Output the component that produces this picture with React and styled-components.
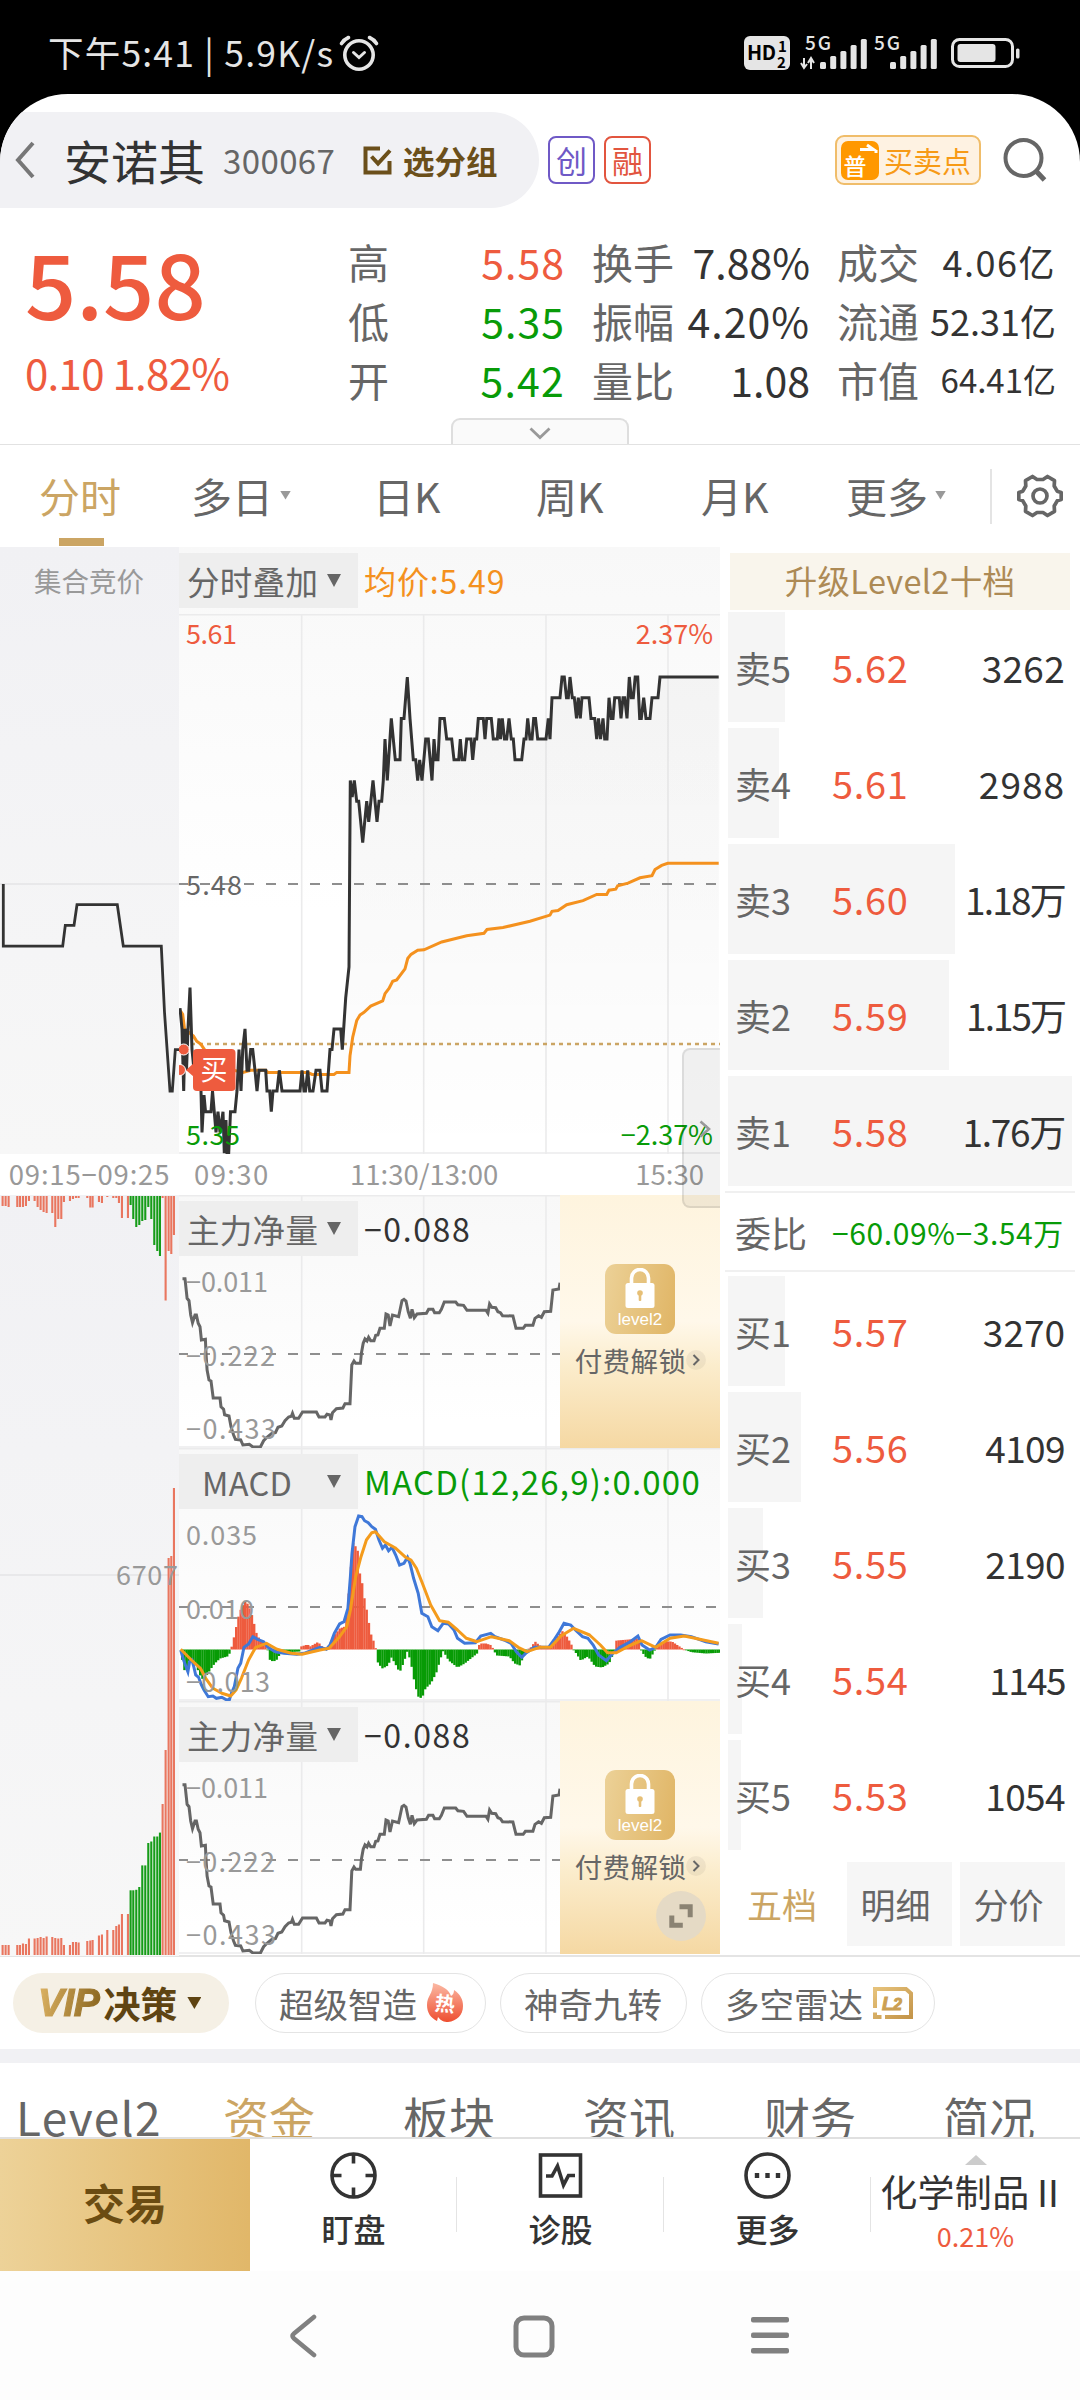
import React from "react";
import styled, { createGlobalStyle } from "styled-components";

const RED = "#ee5b3e";
const GREEN = "#089b08";
const GOLD = "#cba564";
const ORANGE = "#f4911e";
const FONT = '"Noto Sans CJK SC", "Noto Sans", sans-serif';

// [x, price in cents]
const auctionPoints = [
  [3.3, 548], [3.3, 545], [62.7, 545], [65.3, 546], [74, 546], [77, 547], [117.3, 547], [123.3, 545],
  [161.3, 545], [164.5, 541.8], [170, 538], [172.3, 538], [175.3, 540], [180, 540],
];

const pricePoints = [
  [180, 542], [182, 541], [183.7, 538], [185, 541], [186.5, 539], [188, 541], [190, 543], [192, 540],
  [194, 539], [201, 538], [202, 536], [204, 537.8], [205.5, 537], [211, 537], [212.5, 538], [216, 536],
  [218, 537], [220, 536], [223, 537], [224.3, 535], [226, 536.6], [227, 535], [228.7, 535], [230.5, 537],
  [235, 537], [237, 538], [239, 540], [241, 538], [242.7, 540], [245, 541], [247, 539], [248.7, 539],
  [250.7, 540], [252.7, 540], [255, 539], [257, 538], [259, 539], [265.7, 539], [267, 538],
  [269.7, 538], [271.3, 537], [273, 538], [277, 538], [279.3, 539], [282, 538], [300, 538], [302, 539],
  [304, 538], [305.5, 538], [307.7, 539], [309.7, 538], [313, 538], [316, 539], [320, 539], [322, 538],
  [327, 538], [330, 540], [332, 540], [334, 541], [340.7, 541], [342.3, 540], [345.7, 542.5],
  [349, 544], [349.7, 549], [350.3, 553], [352.2, 552.2], [354.3, 553], [356.7, 552], [358.7, 552],
  [362.7, 550], [366.7, 552], [368.7, 551], [373, 553], [377, 551], [379, 552], [381.7, 552],
  [383.3, 553], [385, 555], [387.3, 553], [391.3, 556], [395.3, 554], [400, 554], [401.3, 556],
  [404, 556], [407.3, 558], [410, 556], [413.3, 554], [415.7, 554], [417.7, 553], [419.7, 554],
  [422, 553], [425.7, 555], [428.3, 555], [432, 553], [434, 555], [435.7, 554], [438, 554], [440, 556],
  [444.3, 556], [446.7, 555], [451.7, 555], [454, 554], [458.7, 554], [460.3, 555], [462, 554],
  [464.7, 554], [466.7, 555], [471, 555], [472.7, 554], [474.7, 555], [476.7, 555], [478.3, 556],
  [483.3, 556], [485, 555], [486.7, 556], [491.3, 556], [493.3, 555], [497.3, 555], [499, 556],
  [500.5, 555], [502.3, 556], [504.5, 555], [506.7, 555], [509, 556], [511.3, 555], [513.3, 555],
  [515, 554], [521.7, 554], [524, 555], [526, 555], [527.7, 556], [530, 555], [532, 555], [533.7, 556],
  [535.5, 556], [537.7, 555], [546, 555], [548.3, 556], [550, 555], [552, 557], [560, 557], [562, 558],
  [564.3, 558], [566.5, 557], [568.3, 557], [570, 558], [572.3, 557], [574.3, 557], [576.5, 556],
  [578.3, 557], [580.3, 556], [582, 557], [589, 557], [591, 556], [594.7, 556], [596.7, 555],
  [598.5, 556], [600.5, 555], [603, 556], [604.7, 555], [607, 555], [609, 557], [611.3, 556],
  [613, 556], [614.7, 557], [619.3, 557], [621, 556], [623, 557], [624.7, 557], [627, 556],
  [629.3, 558], [631.3, 557], [633.3, 557], [635.2, 558], [637.7, 558], [639.7, 556], [641.3, 556],
  [643.7, 557], [646, 556], [650, 556], [652, 557], [658, 557], [660, 558], [718.7, 558],
];

const averagePoints = [
  [180, 541.9], [182.7, 541.7], [184.5, 541], [193.5, 540.65], [196.7, 540.4], [201, 540.25],
  [210, 539.6], [225, 539.1], [243, 538.9], [250.7, 539], [265.7, 539], [267.7, 538.9], [308, 538.9],
  [312, 538.8], [334, 538.8], [336.7, 538.9], [349, 538.9], [350, 539.7], [352.7, 540.6],
  [356.7, 541.4], [360, 541.67], [364, 541.8], [370.7, 542.1], [382.7, 542.35], [385, 542.7],
  [389, 542.95], [392.7, 543.3], [396.7, 543.36], [405, 543.9], [407.7, 544.4], [411, 544.6],
  [417.7, 544.8], [424, 544.82], [441.7, 545.2], [466.7, 545.5], [484, 545.62], [487, 545.8],
  [503, 545.9], [530, 546.2], [550, 546.5], [552, 546.68], [558, 546.72], [566.7, 547], [583, 547.2],
  [596.7, 547.5], [606.7, 547.5], [609, 547.7], [615.7, 547.75], [617.7, 547.92], [628, 548.04],
  [640, 548.3], [652, 548.4], [655, 548.7], [661.7, 548.9], [667.7, 549], [718.7, 549],
];

const flowPoints = [
  [3.5, 83.7], [6, 83.7], [8.1, 103.3], [10, 105.7], [11.7, 120], [13.5, 127.7], [16, 120], [17.4, 120],
  [19.2, 128.3], [21, 131.7], [22.4, 145], [26.4, 144.3], [27, 158.3], [28.1, 175], [30, 185], [32, 186],
  [34.2, 203], [41, 203], [42, 211.7], [44.6, 214.3], [45.6, 219.7], [50, 221], [52, 231.7], [54.6, 240],
  [56.4, 244.3], [61.7, 245], [63.9, 250], [70.3, 249.3], [73.9, 252], [81.4, 252], [84.6, 245.7],
  [88, 242.3], [92.8, 238.3], [96.4, 237.7], [99, 232.3], [102.8, 231], [106, 225.7], [109.6, 222],
  [112.4, 221.3], [113.5, 218.3], [115.3, 223.3], [119.6, 223.3], [123.5, 217], [137.4, 217], [140, 222],
  [146, 222], [148, 219.3], [151, 220], [152, 225], [153.5, 217.7], [157.4, 213.7], [163.9, 213],
  [166, 208.7], [171, 208.7], [172.8, 170], [175, 166], [176.7, 168.3], [181.4, 168.3], [182.4, 158.3],
  [184.2, 148.3], [186, 144], [188, 146], [189.6, 142.3], [191.7, 145.7], [195, 145.7], [196.7, 140.3],
  [198.9, 140], [201, 133.3], [205.3, 133.3], [207, 119], [209.2, 120], [211, 131], [213.5, 120],
  [219.6, 121.7], [223, 105.7], [225, 104.3], [227, 106], [229.2, 116.7], [231.4, 123.3], [233, 114.3],
  [235.3, 122.7], [238, 119], [247.4, 118.3], [249.6, 114.3], [253.9, 114.3], [255.6, 117.7],
  [260.3, 117.7], [262.4, 114.3], [265.3, 107], [276.7, 107], [278.9, 109.7], [284.6, 110.3],
  [288, 115.3], [307, 115.3], [308.9, 118.3], [310.6, 109], [312.8, 112.3], [316.7, 112.7],
  [318.9, 116.7], [321.4, 117.7], [323.5, 120.7], [333.9, 121], [337, 133.3], [344.2, 133.3],
  [346.4, 130.3], [353.9, 130.3], [356, 123.3], [359.6, 120.7], [362.4, 122.3], [365.3, 116.7],
  [371.7, 116.3], [373.9, 95], [380, 94], [381, 87.7],
];

const difPoints = [
  [1.7, 202], [4.6, 212], [7, 218.7], [8.9, 223.7], [10.6, 213.7], [13, 212], [14.6, 218], [16.7, 227],
  [19.6, 229.3], [22.4, 237], [25, 242], [29.2, 248.7], [33.9, 248], [37.4, 250.3], [42.8, 249.3],
  [47, 251.6], [50.3, 252], [52.4, 245.3], [55.3, 238.7], [58.9, 220.3], [61.7, 215.3], [65, 199.3],
  [69.6, 196], [73.9, 188.7], [78.5, 191.3], [84.6, 193.7], [89, 199.3], [96.4, 203.7], [105, 205.3],
  [117.8, 206.3], [125, 205.3], [132, 202.7], [141, 199.3], [147.4, 201.3], [151, 197], [155.3, 185.3],
  [160.6, 176], [165, 173.7], [168.9, 160.3], [171.4, 128.7], [173, 105.3], [176, 78.7], [179.6, 68],
  [183, 68.7], [185.6, 72.7], [189.2, 74.7], [192.8, 78.7], [196.4, 81.3], [200, 92], [203.5, 100.3],
  [206.4, 97], [209.6, 102.7], [213, 99.3], [216.7, 107], [220.6, 117], [225, 115.3], [228.5, 109.3],
  [231, 115.3], [234.6, 130.3], [239.2, 145.3], [242.8, 165.3], [248.9, 168.7], [252.8, 178.7],
  [258.9, 182.7], [264.2, 175.3], [269.6, 176], [275, 182], [278.5, 190.3], [285.6, 195.3],
  [296.4, 194.7], [301.7, 188], [311.7, 185.3], [316, 188.7], [325, 192], [332, 195.3], [337.4, 203.7],
  [342.8, 209.3], [347.4, 204.7], [355.3, 199.3], [369.6, 199.3], [375, 192], [380.3, 183.7],
  [385, 175.3], [391.7, 177], [396.4, 182], [403.5, 188.7], [408.9, 190.3], [414.2, 197], [419.6, 207],
  [427.4, 212.7], [433.9, 205.3], [441, 199.3], [449.9, 194.7], [458.9, 188], [463, 197], [470.6, 202],
  [476.7, 199.3], [482, 191.3], [491, 187], [501.7, 187], [512.4, 188.7], [526.7, 193.7], [539.6, 196],
];

const deaPoints = [
  [1.7, 201.3], [12.4, 212], [21.4, 220.3], [26.7, 230.3], [33.9, 240.3], [42.8, 245.3], [51.7, 248],
  [57, 242], [62.4, 230.3], [69.6, 212], [76.7, 199.3], [87.4, 195.3], [98, 201.3], [112.4, 205.3],
  [123, 206.3], [141, 202], [150, 200.3], [160.6, 188.7], [167.8, 178.7], [171.4, 162], [176.7, 128.7],
  [182, 108.7], [187.4, 92], [192.8, 84.7], [196.4, 83.7], [205.3, 93.7], [216, 99.7], [226.7, 109.3],
  [232, 112], [237.4, 120.3], [242.8, 133.7], [251.7, 157], [260.6, 172.7], [269.6, 174.3],
  [278.5, 182], [287.4, 190.3], [298, 193.7], [312.4, 188.7], [330.3, 192.7], [339.2, 199.3],
  [348, 203.7], [360.6, 199.3], [371.4, 199.3], [382, 188], [394.6, 180.3], [410.6, 187],
  [421.4, 197], [428.5, 204.7], [437.4, 204.7], [449.9, 198], [462.4, 192.7], [476.7, 199.3],
  [491, 190.3], [505.3, 188], [539.6, 195.3],
];

// [x, bar height], positive is above the zero line
const histogram = [
  [1.5, 0], [4.6, -20], [7, -22], [10.6, -9], [16, -14], [22.4, -29], [25, -30], [32, -19], [35.6, -14],
  [41, -9], [50, -6.5], [51, 0], [52.4, 2], [54.6, 11], [57, 22], [59.6, 34], [62.4, 42], [66.7, 49],
  [70.3, 42], [73, 34], [76, 22], [78, 14], [82, 9], [87.4, 6], [88.5, 0], [91, -11], [94.6, -12],
  [98, -10], [101.7, -3], [121, -2], [122, 3], [128.5, 5], [131, 3], [139, 7.5], [143, 3], [148, 0],
  [155, 14], [160.6, 21], [166, 23], [169.6, 56], [173.9, 107], [178.5, 100], [180.3, 77], [182, 74],
  [185, 53], [187.4, 41], [189.6, 28], [191.7, 16], [194, 10], [196.4, 2], [197, 0], [199, -14],
  [203.5, -19], [208.9, -16], [212.4, -8], [216, -14], [220.6, -23], [225, -12], [228.5, -1],
  [232, -14], [235.6, -34], [239, -47], [242.8, -49], [246.4, -39], [251.7, -34], [257, -24],
  [262.4, -6], [264.2, -1.5], [269.6, -11], [278.5, -18], [285.6, -14], [298, -4], [298.5, 2],
  [301, 6], [307, 6], [313, 4], [314, 0], [317.8, -6], [330.3, -7], [335.6, -14], [341, -16],
  [344.6, -6], [348, 0], [351.7, 2], [356, 8], [360.6, 4], [371.4, 2], [376.7, 11], [384, 19],
  [389, 11], [393.9, 2], [394.6, 0], [401.7, -11], [408.9, -7], [416, -17], [423, -18], [430, -14],
  [435.6, -1], [436, 5], [437.4, 9], [449.9, 10], [458.9, 11], [461.5, 0], [466, -7], [470.6, -10],
  [475, -2], [477, 1], [485.6, 8], [492.8, 8], [505, 0], [512.4, -2.7], [526.7, -4], [541, -3.3],
];

// [x, volume bar, matched bar], each in px
const auctionVolumes = [
  [8, 10, 10], [17, 10, 10], [26, 10, 11], [52, 10, 11], [60, 10, 11], [69, 11.5, 11], [78, 11, 10],
  [87, 16.5, 5], [104, 16.5, 5], [113, 17, 11], [122, 18, 14], [131, 17, 16], [140, 18.5, 17],
  [157, 18, 17], [166, 17, 31], [175, 16.5, 23], [184, 17, 23], [192, 10, 6], [210, 10, 5],
  [219, 13, 3], [228, 13, 2], [236, 12.5, 2], [262, 14, 2], [271, 14.5, 11.5], [278, 15, 11.5],
  [297, 19.5, 6], [306, 20.5, 7], [322, 25, 1], [340, 25, 2], [349, 29, 2], [357, 30.5, 7],
  [366, 41, 22], [384, 41, 22], [392, 64.7, 9, 1], [400, 64.7, 23, 1], [409, 65.2, 31, 1],
  [418, 68, 29, 1], [427, 89.6, 25, 1], [436, 89.6, 24, 1], [445, 112, 11, 1], [454, 113.5, 23, 1],
  [463, 118.5, 49, 1], [472, 118.5, 55, 1], [480, 122.4, 60, 1], [488, 151, 2], [497, 205, 104.5],
  [506, 397, 55], [514, 399, 58], [522, 467, 39],
];

const sells = [
  { label: "卖5", price: "5.62", volume: "3262", bar: 57, spacing: 0.3 },
  { label: "卖4", price: "5.61", volume: "2988", bar: 51, spacing: 1 },
  { label: "卖3", price: "5.60", volume: "1.18万", bar: 227, spacing: -1.8 },
  { label: "卖2", price: "5.59", volume: "1.15万", bar: 221, spacing: -2 },
  { label: "卖1", price: "5.58", volume: "1.76万", bar: 344, spacing: -1.3 },
];

const buys = [
  { label: "买1", price: "5.57", volume: "3270", bar: 57, spacing: 0 },
  { label: "买2", price: "5.56", volume: "4109", bar: 73, spacing: -0.6 },
  { label: "买3", price: "5.55", volume: "2190", bar: 35, spacing: -0.6 },
  { label: "买4", price: "5.54", volume: "1145", bar: 14, spacing: -1.6 },
  { label: "买5", price: "5.53", volume: "1054", bar: 13, spacing: -0.6 },
];

const toLine = (points) => points.map((p) => p.join(",")).join(" ");
const priceToY = (price, mid) => mid + (548 - price) * 20.7;
const toPriceLine = (points, left, mid) =>
  toLine(points.map(([x, p]) => [x - left, priceToY(p, mid).toFixed(1)]));

function heightAt(x) {
  for (let i = 1; i < histogram.length; i++) {
    const [x0, h0] = histogram[i - 1];
    const [x1, h1] = histogram[i];
    if (x <= x1) return h0 + ((h1 - h0) * (x - x0)) / (x1 - x0);
  }
  return 0;
}

const histogramBars = [];
for (let x = 2; x < 540; x += 2.25) histogramBars.push([x, heightAt(x + 1.1)]);

const GRID_X = [122.7, 244.7, 367, 489];

function StatusIcons() {
  const tops = [63, 57, 52, 46, 40];
  return (
    <svg width="280" height="40" viewBox="742 34 280 40" fill="#e5e5e5">
      <rect x="744" y="37" width="46" height="34" rx="6" />
      <text x="747" y="61" fontSize="20" fontWeight="700" fill="#000" textLength="29">HD</text>
      <text x="778" y="53" fontSize="15" fontWeight="700" fill="#000">1</text>
      <text x="777" y="69" fontSize="15" fontWeight="700" fill="#000">2</text>
      <text x="805" y="51" fontSize="19" fontWeight="500" textLength="26">5G</text>
      <text x="874" y="51" fontSize="19" fontWeight="500" textLength="26">5G</text>
      <path d="M804 59v9M801 64l3 5 3-4M811 70v-10M808 64l3-5 3 5" stroke="#e5e5e5" strokeWidth="2" fill="none" />
      {tops.map((top, i) => (
        <rect key={top} x={820 + i * 10.2} y={top} width="6" height={70 - top} rx="1.5" />
      ))}
      {tops.map((top, i) => (
        <rect key={top} x={890 + i * 10.2} y={top} width="6" height={70 - top} rx="1.5" />
      ))}
      <rect x="952.5" y="40.5" width="60" height="27" rx="7" fill="none" stroke="#e5e5e5" strokeWidth="3" />
      <rect x="957.5" y="45" width="38" height="18" rx="3" />
      <rect x="1016" y="49.5" width="3.5" height="10" rx="1.5" />
    </svg>
  );
}

function AlarmIcon() {
  return (
    <svg width="40" height="38" viewBox="0 0 40 38" fill="none" stroke="#e5e5e5" strokeWidth="3.6" strokeLinecap="round">
      <circle cx="20" cy="21" r="14.2" />
      <path d="M14.5 18.5l5.5 5 5.5-5" strokeWidth="3" />
      <path d="M2.5 9.5a16 16 0 0 1 7-6M37.5 9.5a16 16 0 0 0-7-6" />
    </svg>
  );
}

function Guides({ height, top = 0 }) {
  return (
    <g stroke="#ebebec" strokeWidth="1.6">
      {GRID_X.map((x) => (
        <line key={x} x1={x} x2={x} y1={top} y2={height} />
      ))}
      <line x1="0" x2="541" y1={top + 0.8} y2={top + 0.8} />
      <line x1="0" x2="541" y1={height - 1} y2={height - 1} />
    </g>
  );
}

function AuctionChart() {
  return (
    <svg width="179" height="607" viewBox="0 0 179 607">
      <text x="89" y="44.5" fontSize="27.5" fill="#999" textAnchor="middle">集合竞价</text>
      <line x1="0" x2="179" y1="337" y2="337" stroke="#e8e8ea" strokeWidth="2" />
      <polyline points={toPriceLine(auctionPoints, 0, 337)} fill="none" stroke="#333" strokeWidth="2.8" />
    </svg>
  );
}

function AuctionVolumeChart() {
  return (
    <svg width="179" height="761" viewBox="0 0 179 761">
      <line x1="0" x2="179" y1="380" y2="380" stroke="#e8e8ea" strokeWidth="2" />
      {auctionVolumes.map(([x, volume, matched, falling]) => (
        <g key={x} fill={falling ? "#169c18" : "#e9765f"}>
          <rect x={x / 3 - 1.1} y={760 - volume} width="2.1" height={volume} />
          <rect x={x / 3 - 1.1} y="1" width="2.1" height={matched} />
        </g>
      ))}
      <text x="116" y="390" fontSize="27" fill="#999" textLength="62">6707</text>
    </svg>
  );
}

function TrendChart() {
  const line = toPriceLine(pricePoints, 179, 270);
  return (
    <svg width="541" height="540" viewBox="0 0 541 540">
      <defs>
        <linearGradient id="priceArea" x1="0" y1="0" x2="0" y2="1">
          <stop offset="0" stopColor="#000" stopOpacity="0.03" />
          <stop offset="0.5" stopColor="#000" stopOpacity="0.022" />
          <stop offset="1" stopColor="#000" stopOpacity="0" />
        </linearGradient>
      </defs>
      <Guides height={540} />
      <polygon points={`1,540 ${line} 540,540`} fill="url(#priceArea)" />
      <line x1="-1" x2="541" y1="270" y2="270" stroke="#8e8e8e" strokeWidth="2" strokeDasharray="10 12" />
      <line x1="4" x2="541" y1="430" y2="430" stroke={GOLD} strokeWidth="2.5" strokeDasharray="4 4" />
      <polyline points={toPriceLine(averagePoints, 179, 270)} fill="none" stroke={ORANGE} strokeWidth="3" />
      <polyline points={line} fill="none" stroke="#333" strokeWidth="3" />
      <g fontSize="27">
        <text x="7" y="30" fill={RED} textLength="51">5.61</text>
        <text x="534" y="30" fill={RED} textAnchor="end">2.37%</text>
        <text x="7" y="281" fill="#666" textLength="56">5.48</text>
        <text x="7" y="531" fill={GREEN} textLength="54">5.35</text>
        <text x="534" y="531" fill={GREEN} textAnchor="end">−2.37%</text>
      </g>
      <g fill={RED}>
        <circle cx="4.7" cy="435.5" r="5.5" stroke="#fff" strokeWidth="1" />
        <circle cx="1" cy="456" r="5.5" stroke="#fff" strokeWidth="1" />
        <path d="M7 456l8-7v14z" />
        <rect x="14" y="435" width="42.5" height="42" rx="4" />
      </g>
      <text x="35" y="466" fontSize="27" fill="#fff" textAnchor="middle">买</text>
    </svg>
  );
}

function AxisValues({ values }) {
  return (
    <g fontSize="27" fill="#999">
      {values.map(([value, width], i) => (
        <text key={value} x="7" y={97 + i * 73.5} textLength={width}>{value}</text>
      ))}
    </g>
  );
}

function FlowChart() {
  return (
    <svg width="541" height="253" viewBox="0 0 541 253">
      <Guides height={253} />
      <line x1="-1" x2="541" y1="159" y2="159" stroke="#8e8e8e" strokeWidth="1.8" strokeDasharray="10 12" />
      <polyline points={toLine(flowPoints)} fill="none" stroke="#666" strokeWidth="3" />
      <AxisValues values={[["−0.011", 82], ["−0.222", 89], ["−0.433", 90]]} />
    </svg>
  );
}

function MacdChart() {
  return (
    <svg width="541" height="253" viewBox="0 0 541 253">
      <Guides height={253} />
      <line x1="-1" x2="541" y1="159" y2="159" stroke="#8e8e8e" strokeWidth="1.8" strokeDasharray="10 12" />
      {histogramBars.map(([x, h]) => (
        <rect
          key={x}
          x={x}
          y={h > 0 ? 201.5 - h : 201.5}
          width="2.4"
          height={Math.max(Math.abs(h), 0.8)}
          fill={h > 0 ? RED : "#079b05"}
        />
      ))}
      <polyline points={toLine(difPoints)} fill="none" stroke="#3f78d8" strokeWidth="3" />
      <polyline points={toLine(deaPoints)} fill="none" stroke="#f49b1c" strokeWidth="3" strokeLinejoin="round" />
      <AxisValues values={[["0.035", 71], ["0.010", 68], ["−0.013", 84]]} />
    </svg>
  );
}

function Level2Lock() {
  return (
    <LockPanel>
      <LockTile>
        <svg width="30" height="42" viewBox="0 0 30 42">
          <path d="M6.5 16V10a8.5 8.5 0 0 1 17 0v6" fill="none" stroke="#fff" strokeWidth="3.6" />
          <rect x="0.5" y="15" width="29" height="25" rx="2.5" fill="#fff" />
          <circle cx="15" cy="25" r="2.8" fill="#e6bf76" />
          <rect x="13.7" y="25" width="2.6" height="8" rx="1" fill="#e6bf76" />
        </svg>
        <LockCaption>level2</LockCaption>
      </LockTile>
      <UnlockLink>
        付费解锁
        <UnlockArrow>
          <svg width="8" height="12" viewBox="0 0 8 12" fill="none" stroke="#666" strokeWidth="2">
            <path d="M1.5 1l5 5-5 5" />
          </svg>
        </UnlockArrow>
      </UnlockLink>
    </LockPanel>
  );
}

function IndicatorPicker({ children, centered }) {
  return (
    <Picker>
      <PickerName $centered={centered}>{children}</PickerName>
      <Caret $w={14} $h={13} $color="#666" />
    </Picker>
  );
}

function NetFlowPanel() {
  return (
    <SubPanel>
      <FlowChart />
      <SubHeader>
        <IndicatorPicker>主力净量</IndicatorPicker>
        <Reading $spacing={1.6}>−0.088</Reading>
      </SubHeader>
      <Level2Lock />
    </SubPanel>
  );
}

function OrderRows({ rows }) {
  return rows.map((row) => (
    <OrderRow key={row.label}>
      <DepthBar style={{ width: row.bar }} />
      <OrderLabel>{row.label}</OrderLabel>
      <OrderPrice>{row.price}</OrderPrice>
      <OrderVolume $spacing={row.spacing}>{row.volume}</OrderVolume>
    </OrderRow>
  ));
}

function App() {
  return (
    <Screen>
      <GlobalStyle />
      <StatusBar>
        <StatusTime>下午5:41 | 5.9K/s</StatusTime>
        <AlarmIcon />
        <StatusRight>
          <StatusIcons />
        </StatusRight>
      </StatusBar>
      <Sheet>
        <Header>
          <StockPill>
            <svg width="20" height="38" viewBox="0 0 20 38" fill="none" stroke="#777" strokeWidth="4">
              <path d="M18 2L3 19l15 17" />
            </svg>
            <StockName>安诺其</StockName>
            <StockCode>300067</StockCode>
            <svg width="29" height="29" viewBox="0 0 29 29" fill="none" stroke="#6b4f1a" strokeWidth="4">
              <path d="M17 2.5H2.5v24h24V15" />
              <path d="M8.500 10.500l6.500 7L27 4.500" />
            </svg>
            <GroupLink>选分组</GroupLink>
          </StockPill>
          <Tag $color="#6f59c6">创</Tag>
          <Tag $color="#e2553f">融</Tag>
          <TradePoint>
            <svg width="38" height="39" viewBox="0 0 38 39">
              <rect width="38" height="39" rx="7" fill="#ff9800" />
              <text x="2.5" y="34" fontSize="23" fontWeight="500" fill="#fff">普</text>
              <path d="M19 8.5h13.5L26 4M35 10v2" stroke="#fff" strokeWidth="3" fill="none" />
            </svg>
            买卖点
          </TradePoint>
          <svg width="46" height="46" viewBox="0 0 46 46" fill="none" stroke="#666" strokeWidth="4">
            <circle cx="21.5" cy="21" r="18" />
            <path d="M34 34l8.500 9" strokeWidth="5" />
          </svg>
        </Header>

        <Quote>
          <QuoteMain>
            <LastPrice>5.58</LastPrice>
            <Change>0.10 1.82%</Change>
          </QuoteMain>
          <Stats>
            <Stat>高<StatValue $color={RED} $spacing={1}>5.58</StatValue></Stat>
            <Stat>换手<StatValue>7.88%</StatValue></Stat>
            <Stat>成交<StatValue $size={36} $spacing={1.5}>4.06亿</StatValue></Stat>
            <Stat>低<StatValue $color={GREEN} $spacing={1}>5.35</StatValue></Stat>
            <Stat>振幅<StatValue $spacing={1}>4.20%</StatValue></Stat>
            <Stat>流通<StatValue $size={36}>52.31亿</StatValue></Stat>
            <Stat>开<StatValue $color={GREEN} $spacing={1.2}>5.42</StatValue></Stat>
            <Stat>量比<StatValue>1.08</StatValue></Stat>
            <Stat>市值<StatValue $size={33}>64.41亿</StatValue></Stat>
          </Stats>
          <Handle>
            <svg width="22" height="13" viewBox="0 0 22 13" fill="none" stroke="#999" strokeWidth="2.8">
              <path d="M1.500 1.500L11 10.500l9.500-9" />
            </svg>
          </Handle>
        </Quote>

        <PeriodBar>
          <Period $active>分时</Period>
          <Period>多日<Caret $w={11} $h={9} $color="#999" $gap={7} /></Period>
          <Period>日K</Period>
          <Period>周K</Period>
          <Period>月K</Period>
          <Period>更多<Caret $w={11} $h={9} $color="#999" $gap={7} /></Period>
          <SettingsCell>
            <svg width="46" height="46" viewBox="0 0 46 46" fill="none" stroke="#666" strokeWidth="3.7" strokeLinejoin="round">
              <path d="M15.5 3.5L20 6.5h6l4.500-3 7 4.200-.3 5.300 3 5.200 4 1.300v7l-4 1.300-3 5.200.3 5.300-7 4.200-4.500-3h-6l-4.500 3-7-4.200.3-5.300-3-5.200-4-1.300v-7l4-1.300 3-5.200-.3-5.300z" />
              <circle cx="23" cy="23" r="7" />
            </svg>
          </SettingsCell>
        </PeriodBar>

        <Market>
          <AuctionColumn>
            <AuctionBox>
              <AuctionChart />
            </AuctionBox>
            <TimeAxis $center>09:15−09:25</TimeAxis>
            <AuctionBox>
              <AuctionVolumeChart />
            </AuctionBox>
          </AuctionColumn>

          <TrendColumn>
            <TrendBox>
              <TrendHeader>
                <IndicatorPicker>分时叠加</IndicatorPicker>
                <Reading $color={ORANGE} $spacing={0.9}>均价:5.49</Reading>
              </TrendHeader>
              <TrendChart />
            </TrendBox>
            <TimeAxis>
              <AxisTime $w={156} $spacing={1.4}>09:30</AxisTime>
              <AxisTime>11:30/13:00</AxisTime>
              <AxisTime $end>15:30</AxisTime>
            </TimeAxis>
            <NetFlowPanel />
            <SubPanel>
              <MacdChart />
              <SubHeader>
                <IndicatorPicker centered>MACD</IndicatorPicker>
                <Reading $color={GREEN} $size={33} $spacing={1.2}>MACD(12,26,9):0.000</Reading>
              </SubHeader>
            </SubPanel>
            <NetFlowPanel />
            <PullTab>
              <svg width="12" height="18" viewBox="0 0 12 18" fill="none" stroke="#999" strokeWidth="2.6">
                <path d="M1.500 1.500L10 9l-8.500 7.500" />
              </svg>
            </PullTab>
            <ExpandButton>
              <svg width="24" height="24" viewBox="0 0 24 24" fill="none" stroke="#8b8373" strokeWidth="5">
                <path d="M10.5 2.8h10.700v10.400" />
                <path d="M2.8 11.5v9.700h11" />
              </svg>
            </ExpandButton>
          </TrendColumn>

          <OrderBook>
            <UpgradeBanner>升级Level2十档</UpgradeBanner>
            <OrderRows rows={sells} />
            <RatioRow>
              <OrderLabel>委比</OrderLabel>
              <RatioValue>−60.09%</RatioValue>
              <RatioValue>−3.54万</RatioValue>
            </RatioRow>
            <OrderRows rows={buys} />
            <BookTabs>
              <BookTab $active>五档</BookTab>
              <BookTab>明细</BookTab>
              <BookTab>分价</BookTab>
            </BookTabs>
          </OrderBook>
        </Market>

        <ToolStrip>
          <VipChip>
            <VipMark>VIP</VipMark>决策
            <Caret $w={14} $h={12} $color="#5f4412" $gap={10} />
          </VipChip>
          <ToolChip $w={231}>
            超级智造
            <svg width="36" height="40" viewBox="0 0 36 40">
              <defs>
                <linearGradient id="flame" x1="0" y1="0" x2="0" y2="1">
                  <stop offset="0" stopColor="#fbb9a4" />
                  <stop offset="1" stopColor="#ee4f31" />
                </linearGradient>
              </defs>
              <path d="M6 0c4 1 9 3 13 6 3 2 4 5 5 7 2-1 3-3 3-6 6 4 9 9 9 16 0 9-6 15-15 16-4 0-7-1-10-5l-1 4C4 35 0 30 0 22 0 13 6 11 6 0z" fill="url(#flame)" />
              <text x="8" y="28" fontSize="20" fontWeight="700" fill="#fff" transform="rotate(6 18 20)">热</text>
            </svg>
          </ToolChip>
          <ToolChip $w={187}>神奇九转</ToolChip>
          <ToolChip $w={234}>
            多空雷达
            <svg width="40" height="32" viewBox="0 0 40 32">
              <defs>
                <linearGradient id="badge" x1="0" y1="0" x2="1" y2="1">
                  <stop offset="0" stopColor="#e6c27a" />
                  <stop offset="1" stopColor="#c4954a" />
                </linearGradient>
              </defs>
              <path d="M2 21V2h31l5 4.500V30H12M8.500 30H2v-4.500" fill="none" stroke="url(#badge)" strokeWidth="4" />
              <text x="9" y="23" fontSize="19" fontWeight="700" fontStyle="italic" fontFamily="Liberation Sans" fill="#cba052" stroke="#cba052">L</text>
              <text x="20" y="23" fontSize="16" fontWeight="700" fontStyle="italic" fontFamily="Liberation Sans" fill="#cba052" stroke="#cba052">2</text>
            </svg>
          </ToolChip>
        </ToolStrip>

        <InfoTabs>
          <InfoTab $w={207} $spacing={1.3}>Level2</InfoTab>
          <InfoTab $w={180} $active>资金</InfoTab>
          <InfoTab $w={180}>板块</InfoTab>
          <InfoTab $w={181}>资讯</InfoTab>
          <InfoTab $w={179}>财务</InfoTab>
          <InfoTab>简况</InfoTab>
        </InfoTabs>

        <ActionBar>
          <TradeButton>交易</TradeButton>
          <Action>
            <svg width="47" height="47" viewBox="0 0 47 47" fill="none" stroke="#333" strokeWidth="3.6">
              <circle cx="23.5" cy="23.5" r="21.5" />
              <path d="M23.5 2v9.500M23.5 35.500V45M2 23.500h9.500M35.500 23.500H45" />
            </svg>
            盯盘
          </Action>
          <Action>
            <svg width="47" height="47" viewBox="0 0 47 47" fill="none" stroke="#333" strokeWidth="3.6">
              <rect x="3.5" y="3" width="40" height="41" />
              <path d="M9 24h6l5.500-10 6 19 5-9.500H38" />
            </svg>
            诊股
          </Action>
          <Action>
            <svg width="47" height="47" viewBox="0 0 47 47" fill="none" stroke="#333" strokeWidth="3.6">
              <circle cx="23.5" cy="23.5" r="21.5" />
              <path d="M13 21v5M23.500 21v5M34 21v5" strokeWidth="4.4" />
            </svg>
            更多
          </Action>
          <Sector>
            <svg width="22" height="10" viewBox="0 0 22 10" fill="#ccc">
              <path d="M11 0l11 10H0z" />
            </svg>
            <SectorName>化学制品Ⅱ</SectorName>
            <SectorChange>0.21%</SectorChange>
          </Sector>
        </ActionBar>

        <SystemNav>
          <svg width="28" height="44" viewBox="0 0 28 44" fill="none" stroke="#808080" strokeWidth="4.6" strokeLinecap="round">
            <path d="M25 3L5 19.500q-3 2.500 0 5L25 41" />
          </svg>
          <svg width="42" height="44" viewBox="0 0 42 44" fill="none" stroke="#808080" strokeWidth="5">
            <rect x="3" y="4" width="36" height="37" rx="8" />
          </svg>
          <svg width="38" height="44" viewBox="0 0 38 44" fill="#808080">
            <rect y="3" width="38" height="5.5" rx="2" />
            <rect y="18.5" width="38" height="5.5" rx="2" />
            <rect y="34" width="38" height="5.5" rx="2" />
          </svg>
        </SystemNav>
      </Sheet>
    </Screen>
  );
}

export default App;

const GlobalStyle = createGlobalStyle`
  * {
    box-sizing: border-box;
  }
  body {
    margin: 0;
    background: #000;
    font-family: ${FONT};
  }
  svg {
    display: block;
    flex-shrink: 0;
    font-family: ${FONT};
  }
`;

const Screen = styled.div`
  width: 1080px;
  height: 2400px;
  overflow: hidden;
  background: #000;
`;

const StatusBar = styled.div`
  display: flex;
  align-items: center;
  height: 94px;
  padding: 12px 58px 0 48px;
  color: #e5e5e5;
`;

const StatusTime = styled.span`
  margin: -4px 5px 0 0;
  font-size: 35.5px;
  letter-spacing: 1.2px;
  white-space: nowrap;
`;

const StatusRight = styled.div`
  margin-left: auto;
`;

const Sheet = styled.div`
  display: flex;
  flex-direction: column;
  height: 2306px;
  overflow: hidden;
  border-radius: 68px 68px 0 0;
  background: #fff;
`;

const Header = styled.header`
  display: flex;
  align-items: center;
  height: 114px;
  padding-top: 18px;
`;

const StockPill = styled.div`
  display: flex;
  align-items: center;
  width: 539px;
  height: 96px;
  padding-left: 15px;
  border-radius: 0 48px 48px 0;
  background: #f1f1f4;
  white-space: nowrap;
`;

const StockName = styled.h1`
  margin: 0 0 0 29px;
  width: 159px;
  font-size: 47px;
  font-weight: 400;
  line-height: 90px;
  color: #333;
`;

const StockCode = styled.span`
  width: 140px;
  font-size: 33px;
  letter-spacing: 0.4px;
  color: #666;
`;

const GroupLink = styled.span`
  margin-left: 11px;
  font-size: 31.5px;
  font-weight: 700;
  color: #6b4f1a;
`;

const Tag = styled.span`
  display: flex;
  align-items: center;
  justify-content: center;
  width: 47px;
  height: 48px;
  margin-left: 9px;
  border: 2.5px solid ${(props) => props.$color};
  border-radius: 8px;
  font-size: 31px;
  line-height: 40px;
  color: ${(props) => props.$color};
`;

const TradePoint = styled.div`
  display: flex;
  align-items: center;
  gap: 5px;
  width: 146px;
  height: 50px;
  margin: 0 21px 0 184px;
  padding-left: 4px;
  border: 2px solid #f0bd6a;
  border-radius: 9px;
  background: #fef2e2;
  font-size: 29px;
  line-height: 40px;
  white-space: nowrap;
  color: #f79a16;
`;

const Quote = styled.section`
  display: grid;
  grid-template-columns: 348px 1fr;
  grid-template-rows: 210px 1fr;
  height: 237px;
  border-bottom: 1.5px solid #e2e2e2;
`;

const QuoteMain = styled.div`
  padding: 23px 0 0 25px;
  color: ${RED};
`;

const LastPrice = styled.div`
  font-size: 90px;
  font-weight: 500;
  line-height: 100px;
`;

const Change = styled.div`
  margin-top: 11px;
  font-size: 42px;
  letter-spacing: -0.7px;
  line-height: 60px;
  white-space: nowrap;
`;

const Stats = styled.div`
  display: grid;
  grid-template-columns: 217px 218px 219px;
  grid-auto-rows: 59px;
  column-gap: 27px;
  padding-top: 24px;
`;

const Stat = styled.div`
  display: flex;
  justify-content: space-between;
  font-size: 41px;
  line-height: 59px;
  color: #666;
  white-space: nowrap;
`;

const StatValue = styled.span`
  font-size: ${(props) => props.$size || 41}px;
  letter-spacing: ${(props) => props.$spacing || 0}px;
  color: ${(props) => props.$color || "#333"};
`;

const Handle = styled.div`
  grid-column: 1 / 3;
  align-self: end;
  justify-self: center;
  display: flex;
  justify-content: center;
  width: 178px;
  height: 26px;
  padding-top: 7px;
  border: 2px solid #dedede;
  border-bottom: none;
  border-radius: 9px 9px 0 0;
  background: #fafafa;
`;

const Caret = styled.i`
  flex-shrink: 0;
  width: ${(props) => props.$w}px;
  height: ${(props) => props.$h}px;
  margin-left: ${(props) => props.$gap || 0}px;
  background: ${(props) => props.$color};
  clip-path: polygon(0 0, 100% 0, 50% 100%);
`;

const PeriodBar = styled.nav`
  display: grid;
  grid-template-columns: 152px 182px 163px 165px 145px 144px 90px;
  align-items: center;
  height: 102px;
  padding-left: 39px;
`;

const Period = styled.div`
  position: relative;
  display: flex;
  align-items: center;
  height: 102px;
  font-size: 41px;
  line-height: 96px;
  padding-bottom: 2px;
  color: ${(props) => (props.$active ? GOLD : "#666")};

  &::after {
    content: "";
    display: ${(props) => (props.$active ? "block" : "none")};
    position: absolute;
    left: 20px;
    bottom: 1px;
    width: 45px;
    height: 8px;
    background: ${GOLD};
  }
`;

const SettingsCell = styled.div`
  display: flex;
  align-items: center;
  height: 55px;
  padding-left: 25px;
  border-left: 2px solid #e4e4e4;
`;

const Market = styled.section`
  display: flex;
  height: 1410px;
  border-bottom: 2px solid #e4e4e4;
`;

const AuctionColumn = styled.div`
  width: 179px;
`;

const AuctionBox = styled.div`
  background: linear-gradient(#f1f1f4, #f7f7f7);
`;

const TimeAxis = styled.div`
  display: flex;
  justify-content: ${(props) => (props.$center ? "center" : "flex-start")};
  height: 41px;
  padding: ${(props) => (props.$center ? 0 : "0 16px 0 15px")};
  font-size: 27.5px;
  letter-spacing: ${(props) => (props.$center ? 0.8 : 0)}px;
  line-height: 38px;
  white-space: nowrap;
  color: #999;
`;

const AxisTime = styled.span`
  width: ${(props) => (props.$w ? `${props.$w}px` : "auto")};
  margin-left: ${(props) => (props.$end ? "auto" : 0)};
  letter-spacing: ${(props) => props.$spacing || 0}px;
`;

const TrendColumn = styled.div`
  position: relative;
  width: 541px;
`;

const TrendBox = styled.div`
  height: 607px;
  background: linear-gradient(#f8f8f8, #fff 60%);
`;

const TrendHeader = styled.div`
  display: flex;
  align-items: flex-start;
  height: 67px;
  padding-top: 6px;
`;

const Picker = styled.div`
  display: flex;
  align-items: center;
  width: 179px;
  height: 55px;
  padding-left: 8px;
  background: #eee;
`;

const PickerName = styled.span`
  width: 140px;
  padding-left: ${(props) => (props.$centered ? 15 : 0)}px;
  font-size: 32.5px;
  letter-spacing: 0.3px;
  line-height: 52px;
  color: #666;
`;

const Reading = styled.span`
  margin-left: 6px;
  font-size: ${(props) => props.$size || 32}px;
  letter-spacing: ${(props) => props.$spacing || 0}px;
  line-height: 54px;
  white-space: nowrap;
  color: ${(props) => props.$color || "#333"};
`;

const SubPanel = styled.div`
  display: grid;
  height: 253px;
  background: linear-gradient(#f8f8f8, #fff 90%);

  > * {
    grid-area: 1 / 1;
  }
`;

const SubHeader = styled.div`
  display: flex;
  align-items: flex-start;
  padding-top: 6px;
`;

const LockPanel = styled.div`
  display: flex;
  flex-direction: column;
  align-items: center;
  justify-self: end;
  width: 160px;
  height: 253px;
  padding-top: 69px;
  background: linear-gradient(#fef4de, #fff8ea 50%, #fbeccb 68%, #f5d8a3);
`;

const LockTile = styled.div`
  display: flex;
  flex-direction: column;
  align-items: center;
  width: 70px;
  height: 70px;
  padding-top: 4px;
  border-radius: 11px;
  background: linear-gradient(100deg, #ecd197, #e0b565);
`;

const LockCaption = styled.span`
  font-family: "Liberation Sans", sans-serif;
  font-size: 17px;
  line-height: 19px;
  color: #fff;
`;

const UnlockLink = styled.div`
  display: flex;
  align-items: center;
  margin-top: 8px;
  padding-left: 1px;
  font-size: 27.5px;
  letter-spacing: 0.4px;
  line-height: 36px;
  white-space: nowrap;
  color: #666;
`;

const UnlockArrow = styled.span`
  display: flex;
  align-items: center;
  justify-content: center;
  width: 20px;
  height: 20px;
  border-radius: 50%;
  background: rgba(0, 0, 0, 0.05);
`;

const PullTab = styled.div`
  position: absolute;
  top: 501px;
  right: 0;
  display: flex;
  align-items: center;
  width: 38px;
  height: 160px;
  padding: 2px 0 0 15px;
  border: 2px solid rgba(0, 0, 0, 0.09);
  border-right: none;
  border-radius: 8px 0 0 8px;
  background: rgba(0, 0, 0, 0.05);
`;

const ExpandButton = styled.div`
  position: absolute;
  right: 14px;
  bottom: 14px;
  display: flex;
  align-items: center;
  justify-content: center;
  width: 50px;
  height: 50px;
  border-radius: 50%;
  background: #e5dac5;
`;

const OrderBook = styled.div`
  width: 360px;
  padding: 6px 5px 0 8px;
`;

const UpgradeBanner = styled.div`
  width: 340px;
  height: 57px;
  margin: 0 0 2px 2px;
  background: #f9f5ec;
  font-size: 32.5px;
  letter-spacing: 0.3px;
  line-height: 54px;
  text-align: center;
  color: #ad8a55;
`;

const OrderRow = styled.div`
  position: relative;
  display: flex;
  align-items: center;
  height: 110px;
  margin-bottom: 6px;
  padding: 0 14px 0 7px;
  line-height: 106px;
`;

const DepthBar = styled.div`
  position: absolute;
  left: 0;
  top: 0;
  height: 110px;
  background: #f5f5f5;
`;

const OrderLabel = styled.span`
  position: relative;
  width: 97px;
  font-size: 36px;
  color: #666;
`;

const OrderPrice = styled.span`
  position: relative;
  font-size: 38px;
  letter-spacing: 0.7px;
  color: ${RED};
`;

const OrderVolume = styled.span`
  position: relative;
  margin-left: auto;
  margin-right: -4px;
  font-size: 37px;
  letter-spacing: ${(props) => props.$spacing || 0}px;
  color: #333;
`;

const RatioRow = styled.div`
  display: flex;
  align-items: center;
  height: 81px;
  margin: -1px 0 4px -3px;
  padding-left: 10px;
  border-top: 2px solid #f0f0f0;
  border-bottom: 2px solid #f0f0f0;
  line-height: 74px;
  white-space: nowrap;
`;

const RatioValue = styled.span`
  font-size: 30px;
  letter-spacing: 0.6px;
  color: ${GREEN};
`;

const BookTabs = styled.div`
  display: flex;
  justify-content: flex-end;
  gap: 8px;
  margin-top: 12px;
  padding-right: 10px;
`;

const BookTab = styled.div`
  width: 105px;
  height: 84px;
  padding-right: ${(props) => (props.$active ? 9 : 8)}px;
  background: ${(props) => (props.$active ? "none" : "#f6f6f6")};
  font-size: 35px;
  line-height: 84px;
  text-align: center;
  color: ${(props) => (props.$active ? GOLD : "#666")};
`;

const ToolStrip = styled.div`
  display: flex;
  flex-shrink: 0;
  gap: 14px;
  height: 106px;
  padding: 16px 0 0 13px;
  border-bottom: 14px solid #f1f1f4;
`;

const VipChip = styled.div`
  display: flex;
  align-items: center;
  width: 216px;
  height: 60px;
  margin-right: 12px;
  padding-left: 25px;
  border-radius: 30px;
  background: #f5f0e5;
  font-size: 37px;
  font-weight: 700;
  line-height: 56px;
  color: #5f4412;
`;

const VipMark = styled.span`
  margin-right: 2px;
  padding-right: 2px;
  background: linear-gradient(100deg, #e0b666, #84601a);
  -webkit-background-clip: text;
  background-clip: text;
  font-family: "Liberation Sans", sans-serif;
  font-size: 39px;
  font-style: italic;
  letter-spacing: -0.5px;
  -webkit-text-stroke: 1.2px transparent;
  color: transparent;
`;

const ToolChip = styled.div`
  display: flex;
  align-items: center;
  gap: 10px;
  width: ${(props) => props.$w}px;
  height: 60px;
  padding-left: 23px;
  border: 1.5px solid #e4e4e4;
  border-radius: 30px;
  font-size: 34.5px;
  line-height: 54px;
  white-space: nowrap;
  color: #666;
`;

const InfoTabs = styled.nav`
  display: flex;
  flex-shrink: 0;
  height: 76px;
  padding: 19px 0 0 16px;
  overflow: hidden;
  border-bottom: 2px solid #e0e0e0;
`;

const InfoTab = styled.span`
  width: ${(props) => (props.$w ? `${props.$w}px` : "auto")};
  font-size: 46px;
  letter-spacing: ${(props) => props.$spacing || 0}px;
  line-height: 68px;
  white-space: nowrap;
  color: ${(props) => (props.$active ? GOLD : "#666")};
`;

const ActionBar = styled.div`
  display: flex;
  flex-shrink: 0;
  height: 132px;
`;

const TradeButton = styled.div`
  width: 250px;
  background: linear-gradient(90deg, #edd298, #e1b769);
  font-size: 42px;
  font-weight: 700;
  line-height: 126px;
  text-align: center;
  color: #6b4c12;
`;

const Action = styled.div`
  display: flex;
  flex-direction: column;
  align-items: center;
  gap: 8px;
  width: 207px;
  padding-top: 13px;
  background: linear-gradient(#e4e4e4, #e4e4e4) right 38px / 1.5px 55px no-repeat;
  font-size: 32px;
  font-weight: 500;
  line-height: 42px;
  color: #333;
`;

const Sector = styled.div`
  display: flex;
  flex-direction: column;
  align-items: center;
  flex: 1;
  padding-top: 16px;
`;

const SectorName = styled.div`
  margin: 1px 4px 3px 0;
  font-size: 37px;
  letter-spacing: 0.3px;
  line-height: 50px;
  white-space: nowrap;
  color: #333;
`;

const SectorChange = styled.div`
  font-size: 27px;
  line-height: 34px;
  color: ${RED};
`;

const SystemNav = styled.div`
  display: flex;
  align-items: center;
  flex: 1;
  gap: 196px;
  padding-left: 289px;
  background: #fdfdfd;
`;
